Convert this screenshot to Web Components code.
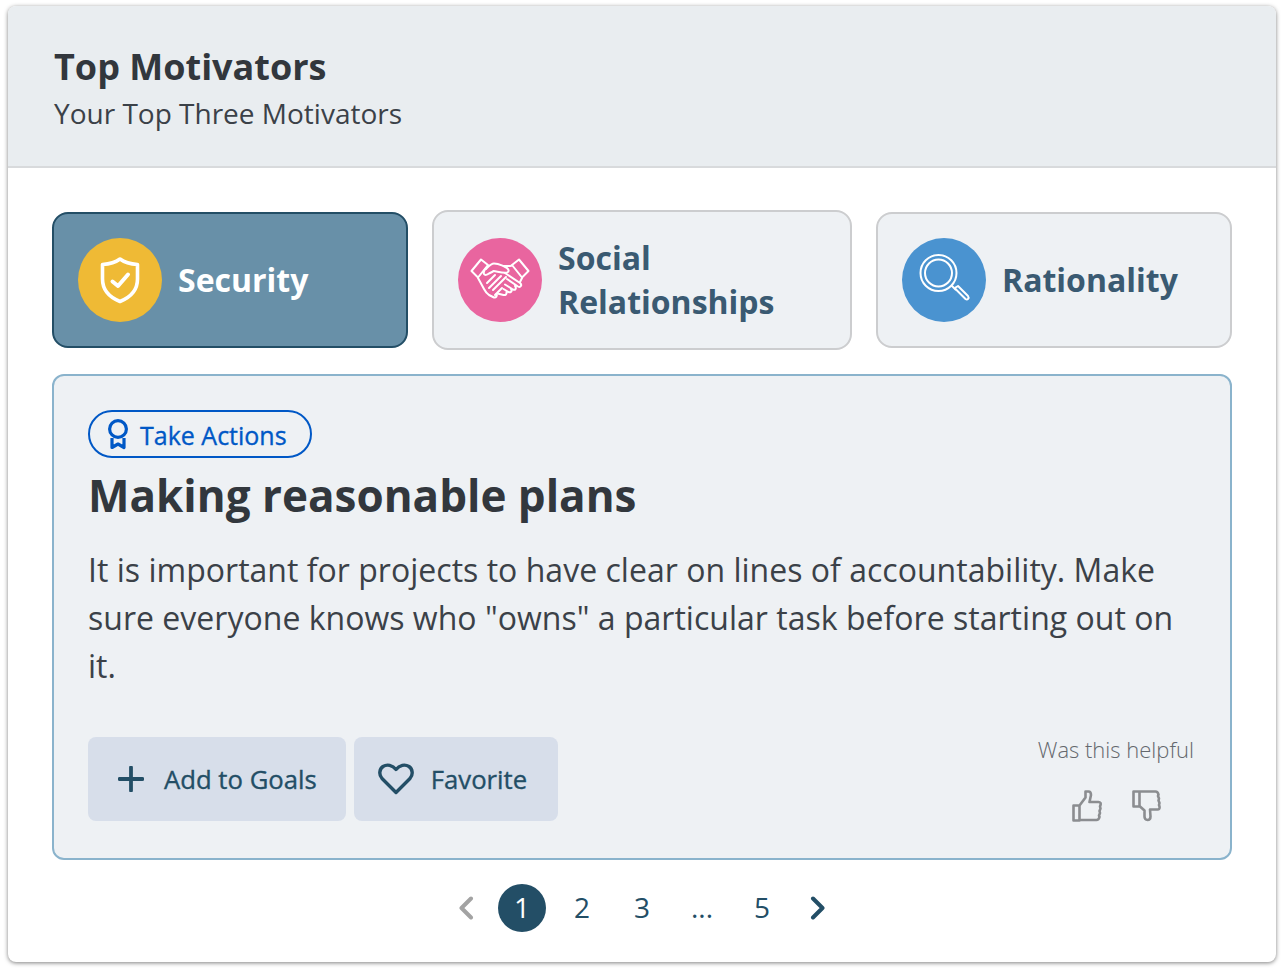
<!DOCTYPE html>
<html lang="en">
<head>
	<meta charset="UTF-8">
	<title>Top Motivators</title>
	<style>
		html, body { margin: 0; background: #fff; }
		body { box-sizing: border-box; min-height: 972px; padding: 6px 8px 0; font-family: "Open Sans", sans-serif; }
	</style>
</head>
<body>

<motivator-card>
	<span slot="title">Top Motivators</span>
	<span slot="subtitle">Your Top Three Motivators</span>

	<motivator-tab slot="tab" icon="shield" active style="--dot: #efba35">Security</motivator-tab>
	<motivator-tab slot="tab" icon="hands" wide style="--dot: #e9659f">Social Relationships</motivator-tab>
	<motivator-tab slot="tab" icon="glass" style="--dot: #4a93d0">Rationality</motivator-tab>

	<action-panel>
		<action-chip slot="chip">Take Actions</action-chip>
		<span slot="heading">Making reasonable plans</span>
		<span slot="body">It is important for projects to have clear on lines of accountability. Make sure everyone knows who "owns" a particular task before starting out on it.</span>
		<action-button slot="button" icon="plus">Add to Goals</action-button>
		<action-button slot="button" icon="heart">Favorite</action-button>
		<helpful-vote slot="helpful">Was this helpful</helpful-vote>
	</action-panel>

	<page-nav></page-nav>
</motivator-card>

<script>
	const ICONS = {
		shield: `<svg viewBox="0 0 84 84" width="84" height="84" fill="none" stroke="#fff" stroke-width="3.600" stroke-linejoin="round" stroke-linecap="round"><path d="M42 21c4 3 10 5 17.500 5.500v14.500c0 11-7.500 18.500-17.500 22.500c-10-4-17.500-11.500-17.500-22.500v-14.500c7.500-.5 13.500-2.500 17.500-5.500z"/><path d="M34.500 43.500l5.500 4.500l10-11.500" stroke-width="4"/></svg>`,
		hands: `<svg viewBox="0 0 84 84" width="84" height="84" fill="none" stroke="#fff" stroke-width="2" stroke-linejoin="round" stroke-linecap="round"><path d="M13.500 33l9.500-11.500l7 5.500l-10 12.500z"/><path d="M70.500 33l-9.500-11.500l-7 5.500l10 12.500z"/><path d="M28 31c3-3 5-5.500 8-5.500c4 0 7 1.500 9.500 2.500c2 1 4.500 2.500 5 4c.5 2-1.500 3-3.500 2.800c-4-.3-8-1.300-11.500-1.800"/><path d="M30 28c-3 3-5 6-4 8c1 1.500 3 1 5-.5l4-2"/><path d="M54 27.500c-3 1-5 .5-8.500 .5"/><path d="M20 40l6 11c1 2 3 4.500 5 6l5 2.500c2 .5 3.500-1.500 2.500-3.500"/><path d="M37 37l-8 8M43 38l-12 12M48 39l-13 13M44 50l-7 7"/><path d="M47 35l15 10c2.500 2 .5 5-2 3.500l-11-7.500M57 48c2 2.500 0 4.500-2 3.500l-8-5M53 51c1.500 2.500-.5 4-2.500 3l-5-3M48.500 54c.5 2-1 3.500-3 3l-6-1.500"/><path d="M62 44l2-4"/></svg>`,
		glass: `<svg viewBox="0 0 84 84" width="84" height="84" fill="none" stroke="#fff" stroke-width="2" stroke-linejoin="round" stroke-linecap="round"><circle cx="36.500" cy="35" r="18"/><circle cx="36.500" cy="35" r="13.500"/><path d="M50 48l3.500 3.500"/><path d="M53.500 49.500l2.500-1.500l10 10c1.500 2-.5 4.500-2.500 3l-10-10z"/></svg>`,
		ribbon: `<svg viewBox="0 0 24 32" width="24" height="32" fill="none" stroke="#0058c6" stroke-width="3.200"><circle cx="12" cy="11" r="8.400"/><path d="M6 20v9.500l6-3.500l6 3.500v-9.500" stroke-linejoin="round"/></svg>`,
		plus: `<svg viewBox="0 0 26 26" width="26" height="26" fill="none" stroke="#234e66" stroke-width="3.800" stroke-linecap="round"><path d="M13 1.500v23M1.500 13h23"/></svg>`,
		heart: `<svg viewBox="0 0 36 32" width="36" height="32" fill="none" stroke="#234e66" stroke-width="3.400" stroke-linejoin="round"><path d="M18 29.500L4 15.500C.5 11.500 1.500 6 5 3.500c4-2.500 9.500-1.500 13 3c3.500-4.500 9-5.500 13-3c3.500 2.500 4.500 8 1 12z"/></svg>`,
		up: `<svg viewBox="0 0 30 32" width="30" height="32" fill="none" stroke="#8b8d90" stroke-width="2.600" stroke-linejoin="round"><path d="M1.500 15.500h6v15h-6zM7.500 15.500l6-8v-6h3c2 0 2.500 2 2.500 3.500l-1.500 7h9c2 0 2.500 1.500 2 3l-.5 1.500l.5 2l-1 2.500l.5 2l-1 2.500l.5 1.500c-.5 2-1.500 3-3 3h-17"/></svg>`,
		down: `<svg viewBox="0 0 30 32" width="30" height="32" fill="none" stroke="#8b8d90" stroke-width="2.600" stroke-linejoin="round"><path d="M1.500 1.500h6v15h-6zM7.500 1.500h16c1.500 0 2.500 1 3 3l-.5 1.500l1 2.500l-.5 2l1 2.500l-.5 2l.5 1.500c.5 2-.5 3-2 3h-7.500l.5 7c0 2-1 3.500-3 3.500c-2 0-3-1.500-3-3.500v-6l-4.500-4"/></svg>`,
		prev: `<svg viewBox="0 0 16 24" width="16" height="24" fill="none" stroke="#a3a3a3" stroke-width="4" stroke-linecap="round" stroke-linejoin="round"><path d="M13 2.500L3.500 12l9.500 9.500"/></svg>`,
		next: `<svg viewBox="0 0 16 24" width="16" height="24" fill="none" stroke="#234e66" stroke-width="4" stroke-linecap="round" stroke-linejoin="round"><path d="M3 2.500l9.500 9.500L3 21.500"/></svg>`,
	};

	class MotivatorCard extends HTMLElement
	{
		constructor() {
			super();
			this.attachShadow({mode: 'open'}).innerHTML = `
				<style>
					:host {
						display: block;
						width: 1268px;
						height: 956px;
						box-sizing: border-box;
						background: #fff;
						border-radius: 8px;
						box-shadow: 0 1px 4px rgba(0, 0, 0, .5);
						overflow: hidden;
						color: #32373d;
					}
					header {
						box-sizing: border-box;
						height: 162px;
						padding: 38px 46px 0;
						background: #e9edf0;
						border-bottom: 2px solid #d8dadc;
					}
					h1 { margin: 0; font-size: 36px; line-height: 46px; font-weight: 700; }
					p { margin: 3px 0 0; font-size: 28px; line-height: 40px; font-weight: 400; color: #3b4148; }
					main { padding: 42px 44px 0; }
					.tabs { display: flex; align-items: center; gap: 24px; margin-bottom: 24px; height: 140px; }
				</style>
				<header>
					<h1><slot name="title"></slot></h1>
					<p><slot name="subtitle"></slot></p>
				</header>
				<main>
					<div class="tabs"><slot name="tab"></slot></div>
					<slot></slot>
				</main>`;
		}
	}

	class MotivatorTab extends HTMLElement
	{
		constructor() {
			super();
			const icon = this.getAttribute('icon');
			this.attachShadow({mode: 'open'}).innerHTML = `
				<style>
					:host {
						display: flex;
						align-items: center;
						gap: 16px;
						box-sizing: border-box;
						width: 356px;
						height: 136px;
						padding: 0 24px;
						background: #eef1f4;
						border: 2px solid #cccdcf;
						border-radius: 16px;
						color: #3a5a72;
						font-size: 32px;
						line-height: 44px;
						font-weight: 700;
					}
					:host([wide]) { width: 420px; height: 140px; }
					:host([active]) { background: #6890a8; border-color: #234e66; color: #fff; }
					.dot {
						flex: none;
						width: 84px;
						height: 84px;
						border-radius: 50%;
						background: var(--dot);
					}
					svg { display: block; }
				</style>
				<div class="dot">${ICONS[icon]}</div>
				<div><slot></slot></div>`;
		}
	}

	class ActionPanel extends HTMLElement
	{
		constructor() {
			super();
			this.attachShadow({mode: 'open'}).innerHTML = `
				<style>
					:host {
						display: block;
						box-sizing: border-box;
						height: 486px;
						padding: 34px 34px 0;
						background: #eef1f4;
						border: 2px solid #8ab3cc;
						border-radius: 12px;
					}
					h2 { margin: 6px 0 0; font-size: 44px; line-height: 62px; font-weight: 700; color: #32373d; }
					.body { margin: 20px 0 0; font-size: 32px; line-height: 48px; letter-spacing: .02px; color: #3b4148; }
					.foot { display: flex; justify-content: space-between; margin-top: 23px; }
					.btns { display: flex; gap: 8px; margin-top: 24px; }
					.helpful { display: flex; flex-direction: column; align-items: flex-end; margin: 21px 2px 0 0; }
				</style>
				<slot name="chip"></slot>
				<h2><slot name="heading"></slot></h2>
				<div class="body"><slot name="body"></slot></div>
				<div class="foot">
					<div class="btns"><slot name="button"></slot></div>
					<div class="helpful"><slot name="helpful"></slot></div>
				</div>`;
		}
	}

	class ActionChip extends HTMLElement
	{
		constructor() {
			super();
			this.attachShadow({mode: 'open'}).innerHTML = `
				<style>
					:host {
						display: inline-flex;
						align-items: center;
						gap: 10px;
						box-sizing: border-box;
						width: 224px;
						height: 48px;
						padding: 0 0 0 16px;
						border: 2px solid #0058c6;
						border-radius: 24px;
						color: #0058c6;
						font-size: 25px;
						-webkit-text-stroke: .35px #0058c6;
						white-space: nowrap;
					}
					span { position: relative; top: 1px; }
					svg { display: block; }
				</style>
				${ICONS.ribbon}<span><slot></slot></span>`;
		}
	}

	class ActionButton extends HTMLElement
	{
		constructor() {
			super();
			const icon = this.getAttribute('icon');
			this.attachShadow({mode: 'open'}).innerHTML = `
				<style>
					:host {
						display: inline-flex;
						align-items: center;
						box-sizing: border-box;
						height: 84px;
						padding: 0 29px 0 30px;
						gap: 20px;
						background: #d7deea;
						border-radius: 8px;
						color: #234e66;
						font-size: 25.700px;
						-webkit-text-stroke: .35px #234e66;
						white-space: nowrap;
					}
					:host([icon="heart"]) { padding: 0 31px 0 24px; gap: 17px; }
					svg { display: block; }
				</style>
				${ICONS[icon]}<slot></slot>`;
		}
	}

	class HelpfulVote extends HTMLElement
	{
		constructor() {
			super();
			this.attachShadow({mode: 'open'}).innerHTML = `
				<style>
					:host { display: flex; flex-direction: column; align-items: flex-end; }
					.label { font-size: 22px; line-height: 30px; font-weight: 300; color: #64686d; }
					.votes { display: flex; gap: 30px; margin: 26px 32px 0 0; }
					svg { display: block; }
				</style>
				<div class="label"><slot></slot></div>
				<div class="votes">${ICONS.up}${ICONS.down}</div>`;
		}
	}

	class PageNav extends HTMLElement
	{
		constructor() {
			super();
			const cell = (t, cur) => `<span class="page${cur ? ' cur' : ''}">${t}</span>`;
			this.attachShadow({mode: 'open'}).innerHTML = `
				<style>
					:host {
						display: flex;
						justify-content: center;
						align-items: center;
						gap: 12px;
						margin-top: 24px;
						height: 48px;
						color: #234e66;
						font-size: 28px;
					}
					.page {
						width: 48px;
						height: 48px;
						line-height: 47px;
						text-align: center;
						border-radius: 50%;
					}
					.cur { background: #234e66; color: #fff; }
					.arrow { width: 24px; display: flex; justify-content: center; }
					.arrow.l { margin-right: 8px; }
					.arrow.r { margin-left: 8px; }
					svg { display: block; }
				</style>
				<span class="arrow l">${ICONS.prev}</span>
				${cell('1', true)}${cell('2')}${cell('3')}${cell('...')}${cell('5')}
				<span class="arrow r">${ICONS.next}</span>`;
		}
	}

	customElements.define('motivator-card', MotivatorCard);
	customElements.define('motivator-tab', MotivatorTab);
	customElements.define('action-panel', ActionPanel);
	customElements.define('action-chip', ActionChip);
	customElements.define('action-button', ActionButton);
	customElements.define('helpful-vote', HelpfulVote);
	customElements.define('page-nav', PageNav);
</script>

</body>
</html>
